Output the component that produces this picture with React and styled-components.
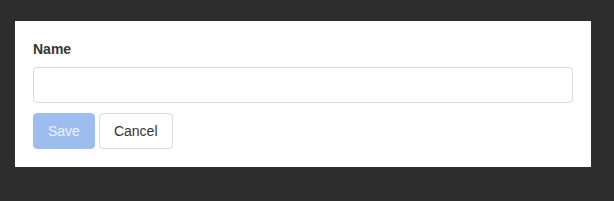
import React from 'react'
import styled, { createGlobalStyle } from 'styled-components'

const Global = createGlobalStyle`
  html, body {
    margin: 0;
    background: #2d2d2d;
    font-family: "Liberation Sans", Arial, sans-serif;
  }
`;

const Page = styled.div`
  padding: 21px 23px 34px 15px;
`;

const Panel = styled.form`
  background: #fff;
  padding: 18px;
  display: flex;
  flex-direction: column;
`;

const Label = styled.label`
  font-size: 14px;
  font-weight: bold;
  color: #363636;
  line-height: 20px;
  margin-bottom: 8px;
`;

const Input = styled.input`
  box-sizing: border-box;
  height: 36px;
  width: 100%;
  border: 1px solid #d9d9d9;
  border-radius: 4px;
  padding: 0 10px;
  font-size: 14px;
  font-family: inherit;
  outline: none;
`;

const Row = styled.div`
  display: flex;
  gap: 4px;
  margin-top: 10px;
`;

const Button = styled.button`
  box-sizing: border-box;
  height: 36px;
  padding: 0 14px;
  font-size: 14px;
  font-family: inherit;
  border-radius: 4px;
  cursor: pointer;
  border: 1px solid ${p => (p.$primary ? '#9dbdee' : '#d9d9d9')};
  background: ${p => (p.$primary ? '#9dbdee' : '#fff')};
  color: ${p => (p.$primary ? '#eef3fc' : '#333')};
`;

export default function App() {
  return (
    <>
      <Global />
      <Page>
        <Panel onSubmit={e => e.preventDefault()}>
          <Label htmlFor="name">Name</Label>
          <Input id="name" type="text" />
          <Row>
            <Button $primary disabled>Save</Button>
            <Button type="button">Cancel</Button>
          </Row>
        </Panel>
      </Page>
    </>
  )
}
